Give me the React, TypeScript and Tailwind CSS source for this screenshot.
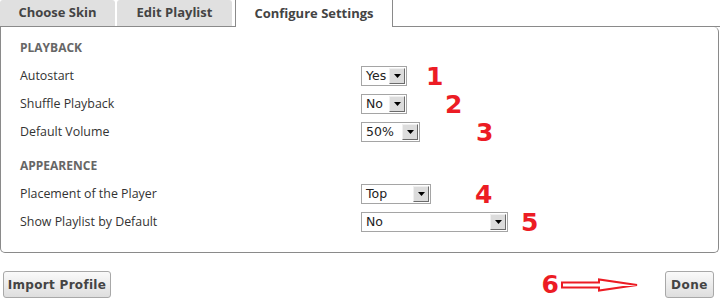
import React from "react";

function Select({ value, width }: { value: string; width: number }) {
  return (
    <div
      className="flex h-[20px] items-center justify-between border border-[#a5a5a5] bg-white pl-[4px] pr-[1px]"
      style={{ width }}
    >
      <span className="text-[12.5px] leading-none text-[#222] [font-family:'DejaVu_Sans',sans-serif]">{value}</span>
      <div className="flex h-[16px] w-[16px] items-center justify-center border border-t-[#f0f0f0] border-l-[#f0f0f0] border-r-[#6b6b6b] border-b-[#6b6b6b] bg-[#dcdcdc]">
        <svg width="7" height="4" viewBox="0 0 7 4">
          <polygon points="0,0 7,0 3.5,4" fill="#000" />
        </svg>
      </div>
    </div>
  );
}

function Num({ n, ml }: { n: string; ml: number }) {
  return (
    <span
      className="text-[25px] font-bold leading-none text-[#ec1c24] [font-family:'DejaVu_Sans',sans-serif]"
      style={{ marginLeft: ml }}
    >
      {n}
    </span>
  );
}

function Row({ label, children }: { label: string; children: React.ReactNode }) {
  return (
    <div className="flex h-[28px] items-center">
      <div className="w-[341px] text-[12.4px] text-[#333]">{label}</div>
      <div className="flex items-center">{children}</div>
    </div>
  );
}

function Heading({ text }: { text: string }) {
  return (
    <div className="flex h-[28px] items-center text-[12px] font-bold text-[#666]">{text}</div>
  );
}

export default function App() {
  return (
    <div className="relative h-[300px] w-[720px] overflow-hidden bg-white [font-family:'Open_Sans',sans-serif]">
      {/* tabs */}
      <div className="flex h-[27px] items-stretch">
        <div className="flex w-[115px] items-center justify-center rounded-t-[3px] border-b border-[#8a8a8a] bg-[#e0e0e0] text-[13px] font-bold text-[#444]">
          Choose Skin
        </div>
        <div className="w-[2px] border-b border-[#8a8a8a]" />
        <div className="flex w-[115px] items-center justify-center rounded-t-[3px] border-b border-[#8a8a8a] bg-[#e0e0e0] text-[13px] font-bold text-[#444]">
          Edit Playlist
        </div>
        <div className="w-[3px] border-b border-[#8a8a8a]" />
        <div className="flex w-[158px] items-center justify-center border-x border-[#8a8a8a] bg-white text-[13px] font-bold text-[#444]">
          Configure Settings
        </div>
        <div className="w-[327px] border-b border-[#8a8a8a]" />
      </div>
      {/* panel */}
      <div className="w-[719px] rounded-b-[5px] rounded-tr-[5px] border border-t-0 border-[#8a8a8a] px-[19px] pb-[16px] pt-[7px]">
        <Heading text="PLAYBACK" />
        <Row label="Autostart">
          <Select value="Yes" width={46} />
          <Num n="1" ml={19} />
        </Row>
        <Row label="Shuffle Playback">
          <Select value="No" width={46} />
          <Num n="2" ml={38} />
        </Row>
        <Row label="Default Volume">
          <Select value="50%" width={59} />
          <Num n="3" ml={56} />
        </Row>
        <div className="h-[6px]" />
        <Heading text="APPEARENCE" />
        <Row label="Placement of the Player">
          <Select value="Top" width={70} />
          <Num n="4" ml={44} />
        </Row>
        <Row label="Show Playlist by Default">
          <Select value="No" width={147} />
          <Num n="5" ml={13} />
        </Row>
      </div>
      {/* bottom buttons */}
      <div className="mt-[18px] flex items-center justify-between pl-[3px] pr-[6px]">
        <button className="h-[27px] w-[108px] rounded-[3px] border border-[#a8a8a8] bg-gradient-to-b from-[#fafafa] to-[#dedede] text-[12px] font-bold tracking-[0.3px] text-[#444] [font-family:'DejaVu_Sans',sans-serif]">
          Import Profile
        </button>
        <div className="flex items-center">
          <Num n="6" ml={0} />
          <svg width="80" height="14" viewBox="0 0 80 14" className="ml-[2px] mr-[24px]">
            <polygon
              points="1,4.5 38,4.5 38,1.5 76,7 38,12.5 38,9.5 1,9.5"
              fill="#fff"
              stroke="#ec1c24"
              strokeWidth="2"
              strokeLinejoin="miter"
            />
          </svg>
          <button className="h-[27px] w-[49px] rounded-[3px] border border-[#a8a8a8] bg-gradient-to-b from-[#fafafa] to-[#dedede] text-[12px] font-bold tracking-[0.5px] text-[#444] [font-family:'DejaVu_Sans',sans-serif]">
            Done
          </button>
        </div>
      </div>
    </div>
  );
}
